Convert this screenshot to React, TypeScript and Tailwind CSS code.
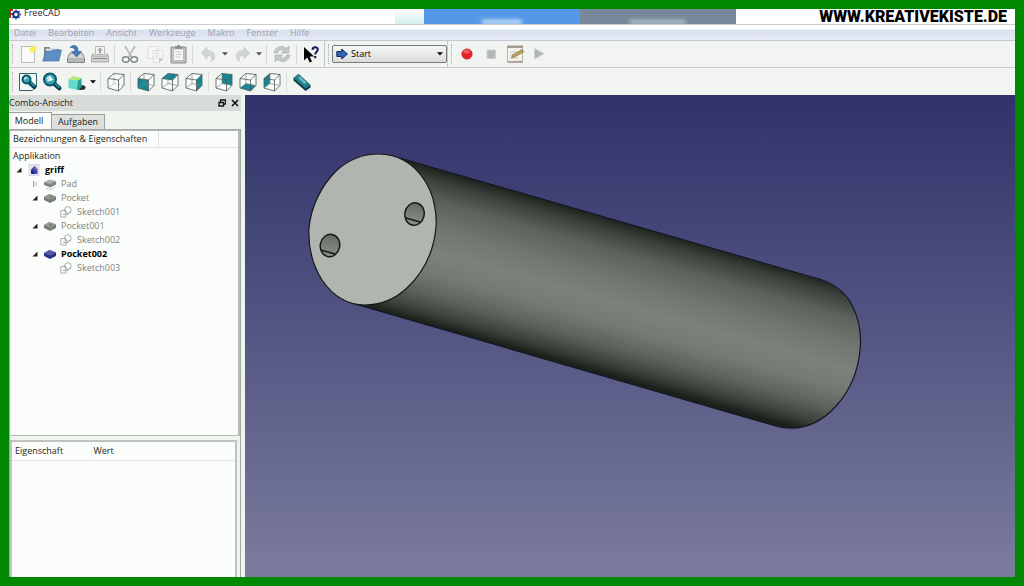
import React from "react";

type IconProps = { children: React.ReactNode };

function Icon({ children }: IconProps) {
  return (
    <svg viewBox="0 0 20 20" className="h-5 w-5 shrink-0" aria-hidden="true">
      {children}
    </svg>
  );
}

function ToolButton({ label, children }: { label: string; children: React.ReactNode }) {
  return (
    <button type="button" aria-label={label} title={label} className="flex h-6 w-6 shrink-0 items-center justify-center">
      <Icon>{children}</Icon>
    </button>
  );
}

function MenuArrow({ label, dim = false }: { label: string; dim?: boolean }) {
  return (
    <button type="button" aria-label={label} className="flex h-6 w-[10px] shrink-0 items-center justify-center">
      <svg viewBox="0 0 6 4" className="h-1 w-1.5" aria-hidden="true">
        <path d="M0 0.3h6L3 3.6z" fill={dim ? "#555" : "#000"} />
      </svg>
    </button>
  );
}

function Sep() {
  return <div className="mx-0.5 h-5 w-0.5 shrink-0 border-l border-[#d8dcd8]" />;
}

function Grip() {
  return <div className="mr-0.5 ml-[3px] h-5 w-0.5 shrink-0 border-l border-dotted border-[#a8aca8]" />;
}

const F: [number, number][] = [[2, 6.5], [12.5, 8], [12.5, 19], [2, 16]];
const B: [number, number][] = [[8, 1.5], [18, 2.5], [18, 13.5], [8, 11.5]];
const pts = (p: [number, number][]) => p.map((q) => q.join(",")).join(" ");
const faces: Record<string, [number, number][]> = {
  front: F,
  top: [F[0], F[1], B[1], B[0]],
  right: [F[1], B[1], B[2], F[2]],
  rear: B,
  bottom: [F[3], F[2], B[2], B[3]],
  left: [F[0], B[0], B[3], F[3]],
};

function Cube({ face }: { face?: string }) {
  return (
    <g strokeLinejoin="round">
      <polygon points={pts([F[0], B[0], B[1], B[2], F[2], F[3]])} fill="#fbfdfb" />
      {face && <polygon points={pts(faces[face])} fill="#16879b" />}
      <g fill="none" stroke="#4c5555" strokeWidth="0.8">
        <polygon points={pts(F)} />
        <path d="M2 6.5 8 1.5 18 2.5 12.5 8M18 2.5v11L12.5 19" />
        <path d="M8 1.5v10l10 2M8 11.5 2 16" stroke="#7b8585" strokeDasharray={face ? undefined : "2 1.5"} strokeWidth="0.7" />
      </g>
    </g>
  );
}

function Lens({ x, y, r }: { x: number; y: number; r: number }) {
  return (
    <g>
      <path d={`M${x + r * 0.7} ${y + r * 0.7}L${x + r * 0.7 + 5} ${y + r * 0.7 + 4.5}`} stroke="#06424f" strokeWidth="4.4" strokeLinecap="round" />
      <path d={`M${x + r * 0.7 + 1} ${y + r * 0.7}l4 3.6`} stroke="#2a91a4" strokeWidth="1.6" strokeLinecap="round" />
      <circle cx={x} cy={y} r={r} fill="#3fa5b8" stroke="#08596a" strokeWidth="2" />
      <path d={`M${x - r * 0.5} ${y}a${r * 0.6} ${r * 0.6} 0 0 1 ${r * 0.7} ${-r * 0.5}`} stroke="#d4f4f8" strokeWidth="1.5" fill="none" />
    </g>
  );
}

function StandardBar() {
  return (
    <>
      <div className="flex items-center border-r border-[#c3c7c5]">
        <Grip />
        <ToolButton label="Neu">
          <path d="M3.500 2.500h13v16h-13z" fill="#fafafa" stroke="#b9bbb6" />
          <path d="m12 2 2 1.200L16 .5l.3 3 3.200-.5-2 2.500 2 2-3-.3-.8 3-1.600-2.600-3 1 1.400-2.800-2-2.200 2.600.4z" fill="#f8ef55" />
        </ToolButton>
        <ToolButton label="Öffnen">
          <path d="M2 16.500V3h5.500l1.500 2h8v11.500z" fill="#858b8d" />
          <path d="M4 4.500h11v8H4z" fill="#cfd6da" />
          <path d="M.8 17 3.500 7.500h5.500l1.500-1.500h9L16.800 17z" fill="#5e8fc4" stroke="#43719f" strokeWidth=".7" />
        </ToolButton>
        <ToolButton label="Speichern">
          <path d="m4 9-2.500 5v4.500h17V14L16 9z" fill="#d5d7d5" stroke="#858a88" />
          <path d="M2 14h16v4H2z" fill="#b6b9b7" />
          <path d="M4 3.500C6 .5 11 .5 12 5V7.500h3.500L10.500 13 5.500 7.500H9C9 4.500 7 3 4 3.500z" fill="#437bb8" stroke="#2c5d91" strokeWidth=".6" />
        </ToolButton>
        <ToolButton label="Drucken">
          <path d="M5.500 2.500h9v8h-9z" fill="#f5f5f5" stroke="#b8bab8" />
          <path d="m10 3.500 3 3h-2v3H9v-3H7z" fill="#a2a6a4" />
          <path d="M4 10H2.500L1.500 13v5h17v-5l-1-3H16v2H4z" fill="#d0d2d0" stroke="#999d9a" strokeWidth=".8" />
          <path d="M3 14.500h14" stroke="#8f9390" />
        </ToolButton>
        <Sep />
        <ToolButton label="Ausschneiden">
          <path d="m5 2 6.500 11M15 2 8.500 13" stroke="#b9bcba" strokeWidth="1.800" />
          <ellipse cx="5.800" cy="15.500" rx="3.300" ry="2.700" fill="none" stroke="#858a88" strokeWidth="1.500" />
          <ellipse cx="14.200" cy="15.500" rx="3.300" ry="2.700" fill="none" stroke="#858a88" strokeWidth="1.500" />
        </ToolButton>
        <ToolButton label="Kopieren">
          <path d="M4 2.500h9v12H4zM9 6.500h10V15l-3.500 3.500H9z" fill="#f7f8f7" stroke="#dde0dd" />
          <path d="M11 9.500h6M11 12h6M11 14.500h4" stroke="#e2e4e2" />
          <path d="m19 14.500-4 4v-4z" fill="#bfc2bf" />
        </ToolButton>
        <ToolButton label="Einfügen">
          <path d="M3 3h15v16H3z" fill="#c0c3c0" stroke="#8b8f8c" />
          <path d="M5.500 5h10v11.500h-10z" fill="#f5f6f5" stroke="#a6aaa7" strokeWidth=".6" />
          <path d="M7 4.800V2.500h2L9.500 1h2l.5 1.500h2v2.300z" fill="#8b8f8c" />
          <path d="M7.500 8h6M7.500 10.500h6M7.500 13h4" stroke="#c7cac7" />
        </ToolButton>
        <Sep />
        <ToolButton label="Rückgängig">
          <path d="M9 3v3.500c5-.3 8 2.500 7.500 7-.3 1.800-1.500 3-3 4 1-4 0-6-4.500-6V15L3.500 9z" fill="#d3d7d4" stroke="#c3c7c4" strokeWidth=".7" />
        </ToolButton>
        <MenuArrow label="Rückgängig Liste" dim />
        <ToolButton label="Wiederherstellen">
          <path d="M12 3v3.500C7 6.200 4 9 4.500 13.500c.3 1.800 1.500 3 3 4-1-4 0-6 4.500-6V15l5.500-6z" fill="#d3d7d4" stroke="#c3c7c4" strokeWidth=".7" />
        </ToolButton>
        <MenuArrow label="Wiederherstellen Liste" dim />
        <Sep />
        <ToolButton label="Aktualisieren">
          <path d="M2 9C3 2.500 10 .5 14 4.500L17 2v7h-7.500L12 6.700C9.500 5 6.500 6 5.500 9z" fill="#c4c8c5" stroke="#a8ada9" strokeWidth=".6" />
          <path d="M18 11c-1 6.500-8 8.500-12 4.500L3 18v-7h7.500L8 13.300c2.500 1.700 5.500.7 6.500-2.300z" fill="#c4c8c5" stroke="#a8ada9" strokeWidth=".6" />
        </ToolButton>
        <Sep />
        <ToolButton label="Direkthilfe">
          <path d="M2 3v13.500l3.300-3 2.400 5 2.300-1-2.300-5h4.500z" fill="#000" />
          <path d="M10.500 6c0-3.800 5.500-3.600 5.300-.3-.2 2-2.600 2.300-2.600 4.800" fill="none" stroke="#15155c" strokeWidth="2" />
          <path d="M12.200 12h2.100v2.200h-2.100z" fill="#15155c" />
        </ToolButton>
      </div>
      <div className="flex items-center border-r border-[#c3c7c5]">
        <Grip />
        <div className="relative flex h-[18px] w-[115px] items-center">
          <select
            aria-label="Arbeitsbereich"
            className="h-full w-full appearance-none rounded-xs border border-[#777c79] bg-linear-to-b from-[#f6f8f5] to-[#d9dcd9] py-0 pr-3 pl-[18px] text-[9px] leading-4 text-black"
          >
            <option>Start</option>
          </select>
          <svg viewBox="0 0 12 12" className="pointer-events-none absolute left-1 h-3 w-3" aria-hidden="true">
            <path d="M.8 3.500h5V1l5.700 5-5.700 5V8.500h-5z" fill="#3563b5" stroke="#142d66" strokeWidth="1" />
          </svg>
          <svg viewBox="0 0 6 4" className="pointer-events-none absolute right-1 h-1 w-1.5" aria-hidden="true">
            <path d="M0 .3h6L3 3.600z" fill="#000" />
          </svg>
        </div>
      </div>
      <div className="flex items-center">
        <Grip />
        <ToolButton label="Makro aufzeichnen">
          <circle cx="10" cy="10" r="5.300" fill="#e02328" stroke="#c23a3a" strokeWidth=".5" />
          <ellipse cx="9.500" cy="7.500" rx="3.300" ry="2" fill="#ee5c5c" />
        </ToolButton>
        <ToolButton label="Aufzeichnung beenden">
          <path d="M6 6h8.500v8.500H6z" fill="#b4b8b5" stroke="#cdd0cd" />
        </ToolButton>
        <ToolButton label="Makros">
          <path d="M2.500 2.500h15v16h-15z" fill="#f2f2ea" stroke="#b6b6ac" />
          <path d="M2 1.500h16V4H2z" fill="#a09b8c" />
          <path d="M5 8h9M5 11h5M5 14h8" stroke="#c8c8c0" />
          <path d="m6.500 14 1-3L17 5.500l1.800 2.300L9.500 13z" fill="#c6a05f" stroke="#77603b" strokeWidth=".6" />
          <path d="m3 18 14-.5" stroke="#a7a28f" strokeWidth="1.500" />
        </ToolButton>
        <ToolButton label="Makro ausführen">
          <path d="m5.500 4.500 9.500 5.300L5.500 15z" fill="#b3b7b4" stroke="#cdd0cd" />
        </ToolButton>
      </div>
    </>
  );
}

function ViewBar() {
  return (
    <div className="flex items-center">
      <Grip />
      <ToolButton label="Alles einpassen">
        <path d="M1.500 1.500h17v13l-4 4h-13z" fill="#f3fafa" stroke="#35606a" strokeWidth="1" />
        <Lens x={8.5} y={7.5} r={4} />
      </ToolButton>
      <ToolButton label="Auswahl einpassen">
        <Lens x={8} y={7.5} r={6} />
        <path d="M5 9.500 8 4l3.500 4z" fill="#eefafa" />
      </ToolButton>
      <ToolButton label="Darstellung">
        <ellipse cx="15" cy="15.500" rx="4.500" ry="2.500" fill="#26302c" />
        <path d="m2.500 7 9 1.500V18l-9-2z" fill="#62dbcb" />
        <path d="m11.500 8.500 4-2.500v9.500l-4 2.500z" fill="#269b97" />
        <path d="m2.500 7 4.500-3 8.500 2-4 2.500z" fill="#b9e778" />
      </ToolButton>
      <MenuArrow label="Darstellungsliste" />
      <Sep />
      <ToolButton label="Axonometrisch"><Cube /></ToolButton>
      <Sep />
      <ToolButton label="Vorne"><Cube face="front" /></ToolButton>
      <ToolButton label="Oben"><Cube face="top" /></ToolButton>
      <ToolButton label="Rechts"><Cube face="right" /></ToolButton>
      <Sep />
      <ToolButton label="Hinten"><Cube face="rear" /></ToolButton>
      <ToolButton label="Unten"><Cube face="bottom" /></ToolButton>
      <ToolButton label="Links"><Cube face="left" /></ToolButton>
      <Sep />
      <ToolButton label="Abstand messen">
        <path d="M1.500 6 6.500 2 18.500 13v2.500l-5 3.500L1.500 8.500z" fill="#0c3d47" />
        <path d="m1.500 6 5-4 12 11-5 3.500z" fill="#257f8e" />
        <path d="m6 6 2-1.500 6.500 6-2 1.500z" fill="#70b8bf" />
      </ToolButton>
    </div>
  );
}

type NodeKind = "doc" | "pad" | "pocket" | "active" | "sketch";
type TreeRow = { name: string; kind: NodeKind; level: number; state?: "open" | "closed" };

const rows: TreeRow[] = [
  { name: "griff", kind: "doc", level: 0, state: "open" },
  { name: "Pad", kind: "pad", level: 1, state: "closed" },
  { name: "Pocket", kind: "pocket", level: 1, state: "open" },
  { name: "Sketch001", kind: "sketch", level: 2 },
  { name: "Pocket001", kind: "pocket", level: 1, state: "open" },
  { name: "Sketch002", kind: "sketch", level: 2 },
  { name: "Pocket002", kind: "active", level: 1, state: "open" },
  { name: "Sketch003", kind: "sketch", level: 2 },
];

const indent = ["pl-[5px]", "pl-[21px]", "pl-[37px]"];

function NodeIcon({ kind }: { kind: NodeKind }) {
  return (
    <svg viewBox="0 0 12 12" className="h-3 w-3 shrink-0" aria-hidden="true">
      {kind === "doc" && (
        <>
          <path d="M1 .5h10v11H1z" fill="#e6e7f5" stroke="#c6c8dc" strokeWidth=".6" />
          <path d="M3 5.500 6.500 2 9.500 5v5H3z" fill="#4146ae" />
          <path d="M6.500 2 9.500 5l-2 1z" fill="#d2605a" />
          <path d="M3 5.500 6 7v3.500L3 9z" fill="#22267c" />
        </>
      )}
      {kind === "pad" && (
        <>
          <path d="M0 4.500 5.500 2 12 3.500v3L6.500 9.500 0 7z" fill="#7f8481" />
          <path d="M0 4 5.500 1.500 12 3 6.500 6z" fill="#aeb3b0" />
          <path d="m2 10 5 1.500 4-2.500" stroke="#c1c5c2" fill="none" />
        </>
      )}
      {(kind === "pocket" || kind === "active") && (
        <>
          <path d="M0 5 5.500 2 12 4.500V8l-6 3-6-3z" fill={kind === "active" ? "#29308e" : "#777c79"} />
          <path d="m0 5 5.500-3L12 4.500l-6 3z" fill={kind === "active" ? "#5460b4" : "#969b98"} />
          <path d="m4.500 4.700 2-1 2.500 1-2.300 1.200z" fill={kind === "active" ? "#873f7c" : "#777c79"} />
        </>
      )}
      {kind === "sketch" && (
        <g fill="none" stroke="#a3a8a5" strokeWidth=".9">
          <path d="M.8 4.500H6V11H.8z" />
          <circle cx="7.800" cy="4" r="3.300" />
          <path d="M3 8.500h5l3-3" />
        </g>
      )}
    </svg>
  );
}

function Tree() {
  return (
    <ul className="pt-px leading-[14px]" role="tree">
      <li className="h-[14px] pl-0.5">Applikation</li>
      {rows.map((r) => {
        const bold = r.kind === "doc" || r.kind === "active";
        return (
          <li key={r.name} role="treeitem" className={`flex h-[14px] items-center ${indent[r.level]}`}>
            <span className="flex w-3 shrink-0 items-center">
              {r.state && (
                <svg viewBox="0 0 6 6" className="h-1.5 w-1.5" aria-hidden="true">
                  {r.state === "open" ? (
                    <path d="M5.500.5v5h-5z" fill="#222" />
                  ) : (
                    <path d="M1.500.5 5 3 1.500 5.500z" fill="#fff" stroke="#999" strokeWidth=".8" />
                  )}
                </svg>
              )}
            </span>
            <NodeIcon kind={r.kind} />
            <span className={bold ? "pl-[5px] font-bold text-black" : "pl-[5px] text-[#7f8481]"}>{r.name}</span>
          </li>
        );
      })}
    </ul>
  );
}

function ComboView() {
  return (
    <aside className="flex w-[236px] shrink-0 flex-col bg-[#f0f4ef] pr-1">
      <header className="flex h-4 items-center justify-between bg-[#d8dcd8] pr-0.5">
        <h2>Combo-Ansicht</h2>
        <div className="flex gap-[5px]">
          <button type="button" aria-label="Andocken">
            <svg viewBox="0 0 8 8" className="h-2 w-2" aria-hidden="true">
              <path d="M2.500 3V1h5v4H6M1 3.500h4.500V7H1z" fill="none" stroke="#111" strokeWidth="1.300" />
            </svg>
          </button>
          <button type="button" aria-label="Schließen">
            <svg viewBox="0 0 8 8" className="h-2 w-2" aria-hidden="true">
              <path d="m1 1 6 6M7 1 1 7" stroke="#111" strokeWidth="1.600" />
            </svg>
          </button>
        </div>
      </header>
      <div className="flex h-[18px] items-end pt-px" role="tablist">
        <button type="button" role="tab" aria-selected="true" className="h-full w-[43px] border-t border-r border-[#9a9f9b] bg-[#fafdf9] pr-0.5">
          Modell
        </button>
        <button type="button" role="tab" aria-selected="false" className="h-[15px] w-[53px] border-t border-r border-[#9a9f9b] bg-[#dde0dd]">
          Aufgaben
        </button>
      </div>
      <section className="flex min-h-0 flex-1 flex-col border border-b-0 border-[#a3a8a4]">
        <div className="h-[306px] border-t border-r-2 border-b border-[#b5bab6] bg-[#fafdf9] pl-px">
          <div className="flex h-[17px] items-center border-b border-[#dfe3df] pl-0.5">
            <span className="flex h-full w-[146px] items-center border-r border-[#dfe3df]">Bezeichnungen &amp; Eigenschaften</span>
          </div>
          <Tree />
        </div>
        <div className="mt-1 mr-[3px] flex-1 border-2 border-b-0 border-[#bfc4c0] bg-[#fafdf9]">
          <table className="w-full border-collapse text-left">
            <thead>
              <tr className="h-[18px] border-b border-[#dfe3df]">
                <th className="w-[79px] border-r border-[#f2f4f2] pl-[3px] font-normal">Eigenschaft</th>
                <th className="pl-0.5 font-normal">Wert</th>
              </tr>
            </thead>
          </table>
        </div>
      </section>
    </aside>
  );
}

function Viewport() {
  return (
    <main className="min-w-0 flex-1 overflow-hidden bg-linear-to-b from-[#31326a] to-[#7b7c9d]">
      <svg viewBox="245 95 770 482" preserveAspectRatio="xMidYMid slice" className="h-full w-full" role="img" aria-label="Zylinder griff">
        <defs>
          <linearGradient id="body" gradientUnits="userSpaceOnUse" x1="625" y1="223" x2="584" y2="368">
            <stop offset="0" stopColor="#20241f" />
            <stop offset="0.07" stopColor="#3a3f39" />
            <stop offset="0.2" stopColor="#5b615b" />
            <stop offset="0.38" stopColor="#727871" />
            <stop offset="0.54" stopColor="#7c827b" />
            <stop offset="0.68" stopColor="#747a73" />
            <stop offset="0.82" stopColor="#5b615a" />
            <stop offset="0.93" stopColor="#3a3f38" />
            <stop offset="1" stopColor="#1c201b" />
          </linearGradient>
          <linearGradient id="hole" x1="0" y1="0" x2="0" y2="1">
            <stop offset="0" stopColor="#666b66" />
            <stop offset="1" stopColor="#8b908b" />
          </linearGradient>
        </defs>
        <path
          d="M400 158 812 277C830 281 844 290 852 305C859 319 862 333 860 350C858 372 850 390 837 405C823 421 806 429 788 428C782 428 775 426 769 424L352 303Z"
          fill="url(#body)"
          stroke="#151725"
          strokeWidth="1.2"
        />
        <path
          d="M379 154C397 154 414 163 425 181C434 195 437 213 436 227C434 250 424 272 407 288C394 300 381 305 365 305C348 305 333 296 322 280C312 264 308 246 309 228C311 207 321 186 336 171C349 159 363 154 379 154Z"
          fill="#b1b5af"
          stroke="#151818"
          strokeWidth="1.2"
        />
        <g stroke="#171a18" strokeWidth="1.500" fill="url(#hole)">
          <ellipse cx="414.500" cy="214" rx="9.700" ry="11.300" transform="rotate(12 414.500 214)" />
          <ellipse cx="330" cy="245.500" rx="9.700" ry="11.300" transform="rotate(12 330 245.500)" />
          <path d="m406 218 14 4M321 250l14 4" />
        </g>
      </svg>
    </main>
  );
}

const menus = ["Datei", "Bearbeiten", "Ansicht", "Werkzeuge", "Makro", "Fenster", "Hilfe"];

export default function App() {
  return (
    <div className="flex h-screen flex-col overflow-hidden border-[9px] border-[#008800] bg-[#f1f4f0] font-['Open_Sans','Noto_Sans',sans-serif] text-[9px] leading-3 text-[#1c1f1d]">
      <div className="flex h-4 shrink-0 border-b border-[#c9cccb] bg-white">
        <div className="flex w-[386px] shrink-0 items-start">
          <svg viewBox="0 0 12 12" className="h-3 w-3" aria-hidden="true">
            <path d="M0 0h4v2H2v2h2v2H2v3H0z" fill="#b6252b" />
            <circle cx="7" cy="5.500" r="2.700" fill="none" stroke="#1c3c8b" strokeWidth="2" />
            <path d="M7 .5v2M7 8.500v2M10.500 5.500H12M9 7.500l1.500 1.500M10.500 2 9 3.500M5 7.500 3.500 9" stroke="#1c3c8b" strokeWidth="1.500" />
          </svg>
          <h1 className="pl-[3px] leading-[8px]">FreeCAD</h1>
        </div>
        <div className="flex min-w-0 flex-1">
          <div className="w-[29px] bg-linear-to-b from-white to-[#d5eeee]" />
          <div className="flex w-[156px] items-end justify-center overflow-hidden bg-[#5598e8]">
            <span className="h-1 w-10 bg-[#d4e9fc] blur-[2px]" />
          </div>
          <div className="flex w-[156px] items-end justify-center overflow-hidden bg-[#76889a]">
            <span className="h-1 w-14 bg-[#b9c5cf] blur-[2px]" />
          </div>
        </div>
        <a href="#kreativekiste" className="shrink-0 pr-2 font-['Roboto','Liberation_Sans',sans-serif] text-[16px] leading-[16px] font-black whitespace-nowrap text-black">
          WWW.KREATIVEKISTE.DE
        </a>
      </div>
      <nav className="flex h-4 shrink-0 items-center gap-3 border-b border-[#c3c8d2] bg-linear-to-b from-white from-25% via-[#d8dfee] via-35% to-[#e6ebf4] pl-[5px] text-[#a0a2b2]">
        {menus.map((m) => (
          <button key={m} type="button">{m}</button>
        ))}
      </nav>
      <div className="flex h-[27px] shrink-0 border-b border-[#c9cdca]">
        <StandardBar />
      </div>
      <div className="flex h-[27px] shrink-0">
        <ViewBar />
      </div>
      <div className="flex min-h-0 flex-1">
        <ComboView />
        <Viewport />
      </div>
    </div>
  );
}
